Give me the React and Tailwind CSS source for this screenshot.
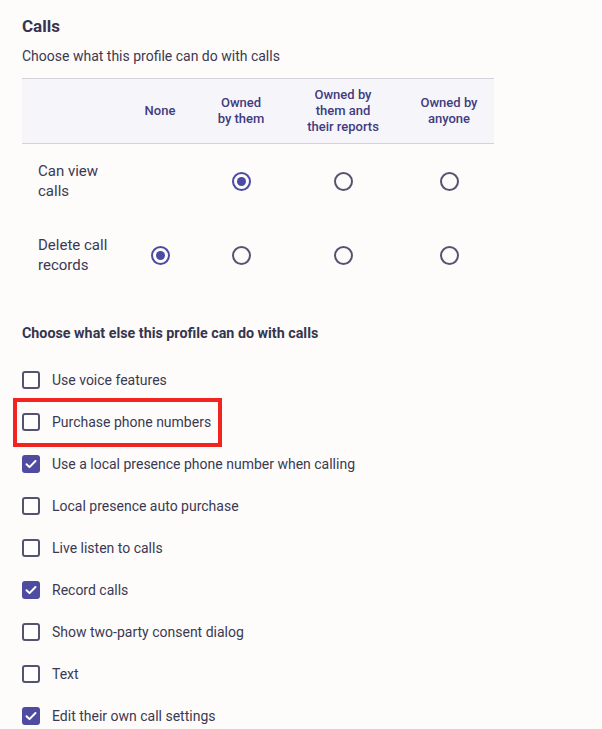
import { useState } from 'react'

const COLUMNS = ['None', 'Owned\nby them', 'Owned by\nthem and\ntheir reports', 'Owned by\nanyone']
const ROWS = [
  { label: 'Can view\ncalls', value: 1, skip: [0] },
  { label: 'Delete call\nrecords', value: 0, skip: [] },
]
const OPTIONS = [
  { label: 'Use voice features', checked: false },
  { label: 'Purchase phone numbers', checked: false, highlight: true },
  { label: 'Use a local presence phone number when calling', checked: true },
  { label: 'Local presence auto purchase', checked: false },
  { label: 'Live listen to calls', checked: false },
  { label: 'Record calls', checked: true },
  { label: 'Show two-party consent dialog', checked: false },
  { label: 'Text', checked: false },
  { label: 'Edit their own call settings', checked: true },
]

function Radio({ checked, onClick }) {
  return (
    <button
      onClick={onClick}
      className={`w-[19px] h-[19px] rounded-full border-2 flex items-center justify-center ${checked ? 'border-[#4c4aa4]' : 'border-[#55546f]'}`}
    >
      {checked && <span className="w-[9px] h-[9px] rounded-full bg-[#4c4aa4]" />}
    </button>
  )
}

function Checkbox({ checked }) {
  return checked ? (
    <span className="w-[18px] h-[18px] rounded-[3px] bg-[#4e4ba0] flex items-center justify-center shrink-0">
      <svg width="14" height="14" viewBox="0 0 14 14" fill="none">
        <path d="M2.5 7.2l3 2.9L11.5 4" stroke="white" strokeWidth="2" strokeLinecap="round" strokeLinejoin="round" />
      </svg>
    </span>
  ) : (
    <span className="w-[18px] h-[18px] rounded-[3px] border-2 border-[#55546f] bg-white shrink-0" />
  )
}

export default function App() {
  const [rows, setRows] = useState(ROWS.map(r => r.value))
  const [opts, setOpts] = useState(OPTIONS.map(o => o.checked))

  return (
    <div className="min-h-[729px] bg-[#fdfcfb] px-[22px] pt-[15px] text-[#3b3952]" style={{ fontFamily: 'Roboto, "Liberation Sans", sans-serif' }}>
      <h2 className="text-[17px] font-bold leading-[22px] text-[#37354d]">Calls</h2>
      <p className="mt-[11px] text-[14px] leading-[16px]">Choose what this profile can do with calls</p>

      {/* Permission table */}
      <div className="mt-[14px] w-[472px]">
        <div className="grid grid-cols-[98px_80px_82px_122px_90px] bg-[#f6f6fa] border-y border-[#d3d2d8] h-[66px] items-center">
          <div />
          {COLUMNS.map(c => (
            <div key={c} className="text-center text-[13px] font-medium leading-[16px] text-[#403c80] whitespace-pre-line">{c}</div>
          ))}
        </div>
        <div>
          {rows.map((val, i) => (
            <div key={i} className="grid grid-cols-[98px_80px_82px_122px_90px] h-[74px] items-center">
              <div className="pl-[16px] text-[15px] leading-[20px] whitespace-pre-line">{ROWS[i].label}</div>
              {COLUMNS.map((c, j) => (
                <div key={c} className="flex justify-center">
                  {!ROWS[i].skip.includes(j) && (
                    <Radio
                      checked={val === j}
                      onClick={() => setRows(prev => prev.map((v, k) => (k === i ? j : v)))}
                    />
                  )}
                </div>
              ))}
            </div>
          ))}
        </div>
      </div>

      <h3 className="mt-[32px] text-[14.3px] font-bold leading-[18px] text-[#37354d]">Choose what else this profile can do with calls</h3>

      <div className="mt-[17px] flex flex-col">
        {OPTIONS.map((o, i) => (
          <div key={o.label} className="h-[42px] flex items-center">
            <label
              className={`flex items-center gap-[12px] cursor-pointer ${o.highlight ? 'border-[4px] border-[#f2241f] -ml-[9px] pl-[5px] pr-[7px] h-[49px]' : ''}`}
              onClick={() => setOpts(prev => prev.map((v, k) => (k === i ? !v : v)))}
            >
              <Checkbox checked={opts[i]} />
              <span className="text-[14px] leading-[18px]">{o.label}</span>
            </label>
          </div>
        ))}
      </div>
    </div>
  )
}
